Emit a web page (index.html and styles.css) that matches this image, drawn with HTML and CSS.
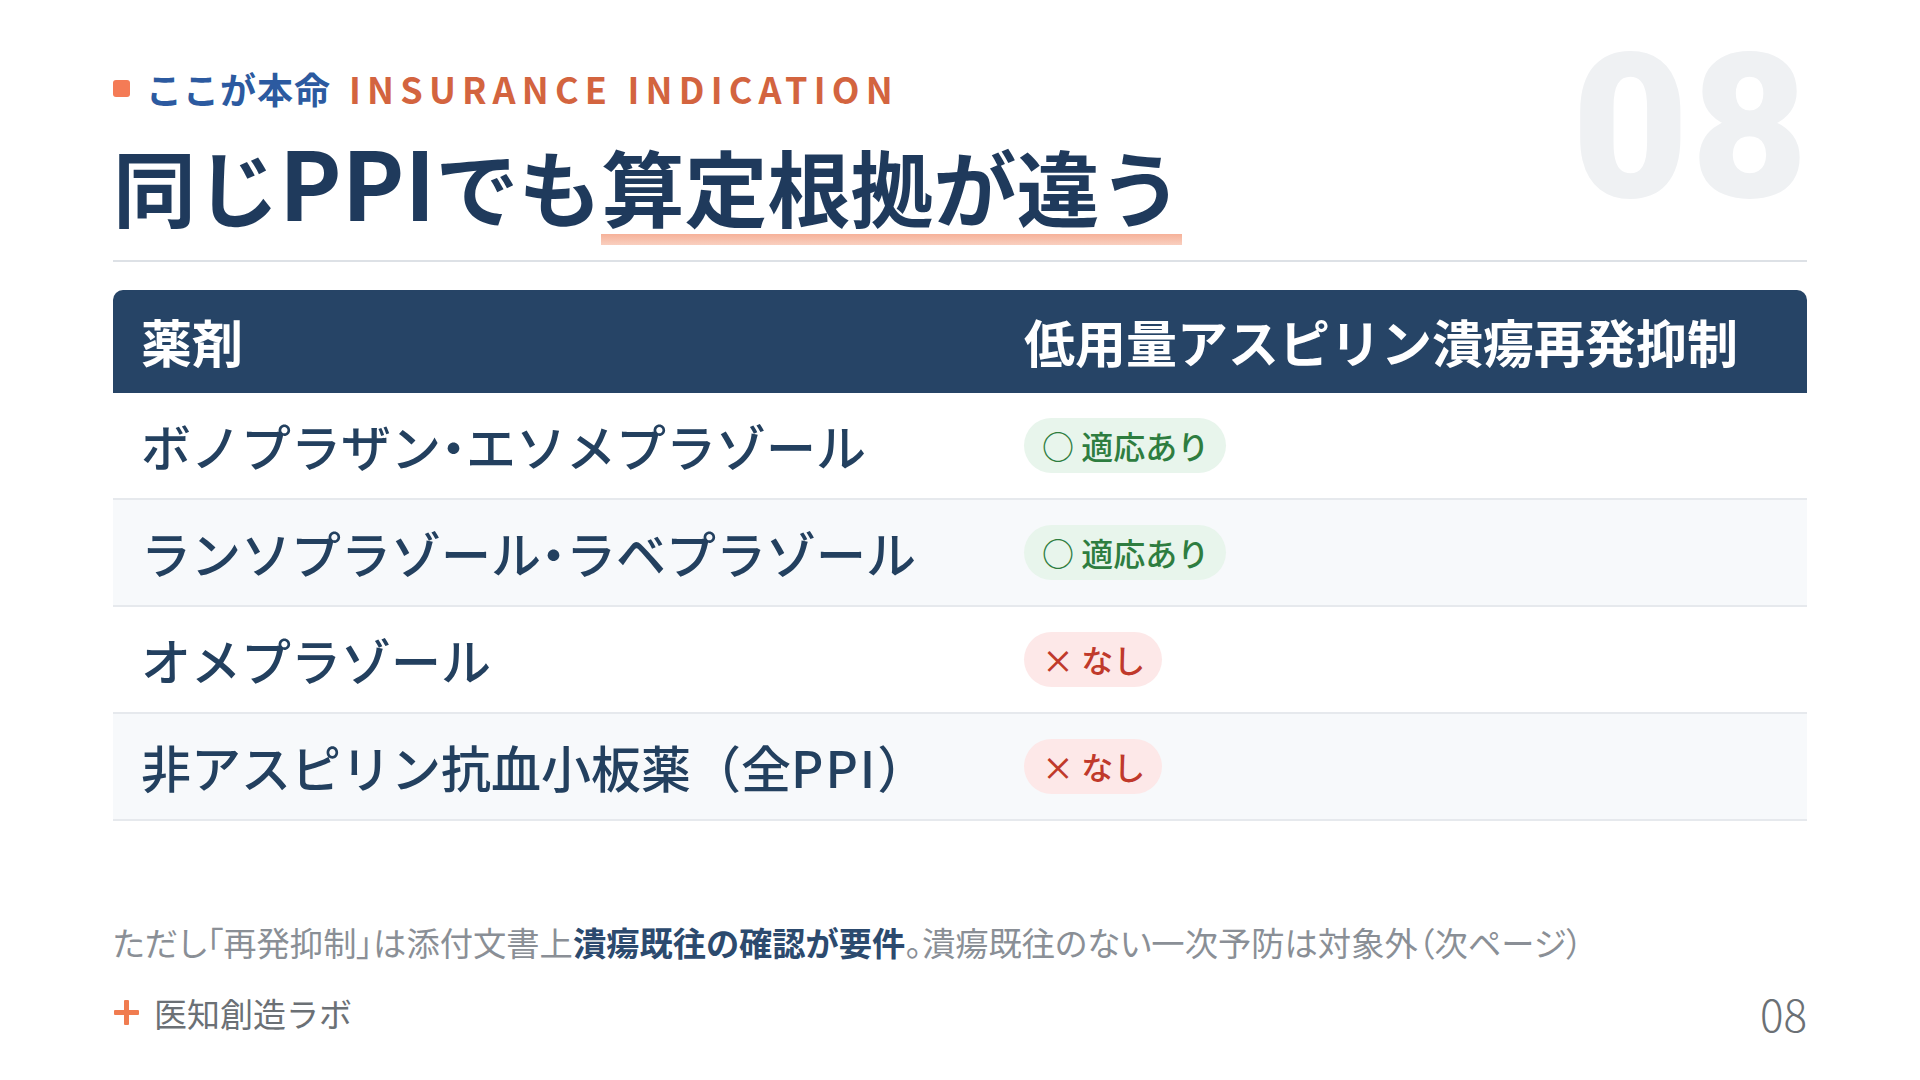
FILE: index.html
```html
<!DOCTYPE html>
<html lang="ja">
<head>
<meta charset="utf-8">
<title>08 INSURANCE INDICATION</title>
<link rel="stylesheet" href="styles.css">
</head>
<body>
<div class="slide">
  <div class="bignum">08</div>
  <header class="head">
    <div class="eyebrow">
      <span class="eyebrow-mark"></span>
      <span class="eyebrow-ja">ここが本命</span>
      <span class="eyebrow-en">INSURANCE INDICATION</span>
    </div>
    <h1 class="title">同じ<span class="latin">PPI</span>でも<span class="hl">算定根拠が違う</span></h1>
  </header>
  <div class="rule"></div>

  <div class="table">
    <div class="row row-head">
      <div class="cell">薬剤</div>
      <div class="cell">低用量アスピリン潰瘍再発抑制</div>
    </div>
    <div class="row">
      <div class="cell name">ボノプラザン<span class="half">・</span>エソメプラゾール</div>
      <div class="cell"><span class="badge ok">○ 適応あり</span></div>
    </div>
    <div class="row alt">
      <div class="cell name">ランソプラゾール<span class="half">・</span>ラベプラゾール</div>
      <div class="cell"><span class="badge ok">○ 適応あり</span></div>
    </div>
    <div class="row">
      <div class="cell name">オメプラゾール</div>
      <div class="cell"><span class="badge ng">× なし</span></div>
    </div>
    <div class="row alt">
      <div class="cell name">非アスピリン抗血小板薬（全<span class="latin-sm">PPI</span>）</div>
      <div class="cell"><span class="badge ng">× なし</span></div>
    </div>
  </div>

  <p class="note">ただし「再発抑制」は添付文書上<strong>潰瘍既往の確認が要件</strong>。潰瘍既往のない一次予防は対象外（次ページ）</p>

  <footer class="foot">
    <div class="brand">
      <svg class="plus" width="27" height="27" viewBox="0 0 27 27" aria-hidden="true">
        <rect x="11" y="1" width="5" height="25" rx="1" fill="#f07c50"/>
        <rect x="1" y="11" width="25" height="5" rx="1" fill="#f07c50"/>
      </svg>
      <span>医知創造ラボ</span>
    </div>
    <div class="page">08</div>
  </footer>
</div>
</body>
</html>
```

FILE: styles.css
```css
* { box-sizing: border-box; margin: 0; padding: 0; }
html, body { width: 1920px; height: 1080px; background: #ffffff; overflow: hidden; }
body { font-family: "Noto Sans CJK JP", "Noto Sans", sans-serif; color: #23405f; }

.slide {
  position: relative;
  width: 1920px;
  height: 1080px;
  padding: 58px 113px 0 113px;
  display: flex;
  flex-direction: column;
}

.bignum {
  position: absolute;
  right: 110px;
  top: 10px;
  font-family: Roboto, "Noto Sans", sans-serif;
  font-size: 202px;
  font-weight: 900;
  line-height: 1.172;
  letter-spacing: 2px;
  color: #eff1f3;
}

.head { position: relative; }

.eyebrow {
  display: flex;
  align-items: center;
  height: 60px;
}
.eyebrow-mark {
  width: 17px;
  height: 17px;
  border-radius: 3px;
  background: #f47b56;
  margin-right: 16px;
}
.eyebrow-ja {
  font-size: 36px;
  font-weight: 700;
  color: #2c5aa0;
  letter-spacing: 1px;
  margin-right: 18px;
}
.eyebrow-en {
  font-size: 36px;
  font-weight: 700;
  color: #d3643f;
  letter-spacing: 6.2px;
}

.title {
  margin-top: 2px;
  font-size: 83px;
  font-weight: 700;
  line-height: 130px;
  color: #1f3a5c;
}
.title .latin { font-size: 94px; line-height: 1; }
.hl {
  background: linear-gradient(to bottom, transparent 0, transparent 91%, #f6b29a 91%, #f9cfbf 100%);
}

.rule {
  margin-top: 10px;
  height: 1.5px;
  background: #dde1e6;
}

.table {
  margin-top: 28px;
  display: flex;
  flex-direction: column;
}
.row {
  display: grid;
  grid-template-columns: 883px 1fr;
  align-items: center;
  height: 107px;
  border-bottom: 2px solid #e6e9ed;
  background: #ffffff;
}
.row.alt { background: #f7f9fb; }
.row-head {
  height: 103px;
  background: #264466;
  border-bottom: none;
  border-radius: 10px 10px 0 0;
  color: #ffffff;
  font-size: 51px;
  font-weight: 700;
}
.cell { padding-left: 28px; white-space: nowrap; }
.name {
  font-size: 50px;
  font-weight: 500;
  color: #23405f;
}
.half { font-feature-settings: "halt" 1; }
.latin-sm { letter-spacing: 2px; }

.badge {
  display: inline-flex;
  align-items: center;
  height: 55px;
  padding: 0 17px 0 18px;
  border-radius: 28px;
  font-size: 32px;
  font-weight: 500;
  white-space: pre;
}
.badge.ok { background: #e8f5ec; color: #2e7d40; }
.badge.ng { background: #fde8e8; color: #c0392b; }

.note {
  margin-top: 97px;
  font-size: 33.3px;
  line-height: 48px;
  color: #8a8f96;
  white-space: nowrap;
  font-feature-settings: "palt" 1;
}
.note strong { color: #2c4a6e; font-weight: 700; }

.foot {
  margin-top: 22px;
  display: flex;
  justify-content: space-between;
  align-items: center;
  height: 50px;
}
.brand {
  display: flex;
  align-items: center;
  font-size: 33px;
  color: #6b7075;
}
.plus { margin-right: 14px; }
.page {
  font-size: 44px;
  color: #6b7075;
  font-weight: 300;
}
```
